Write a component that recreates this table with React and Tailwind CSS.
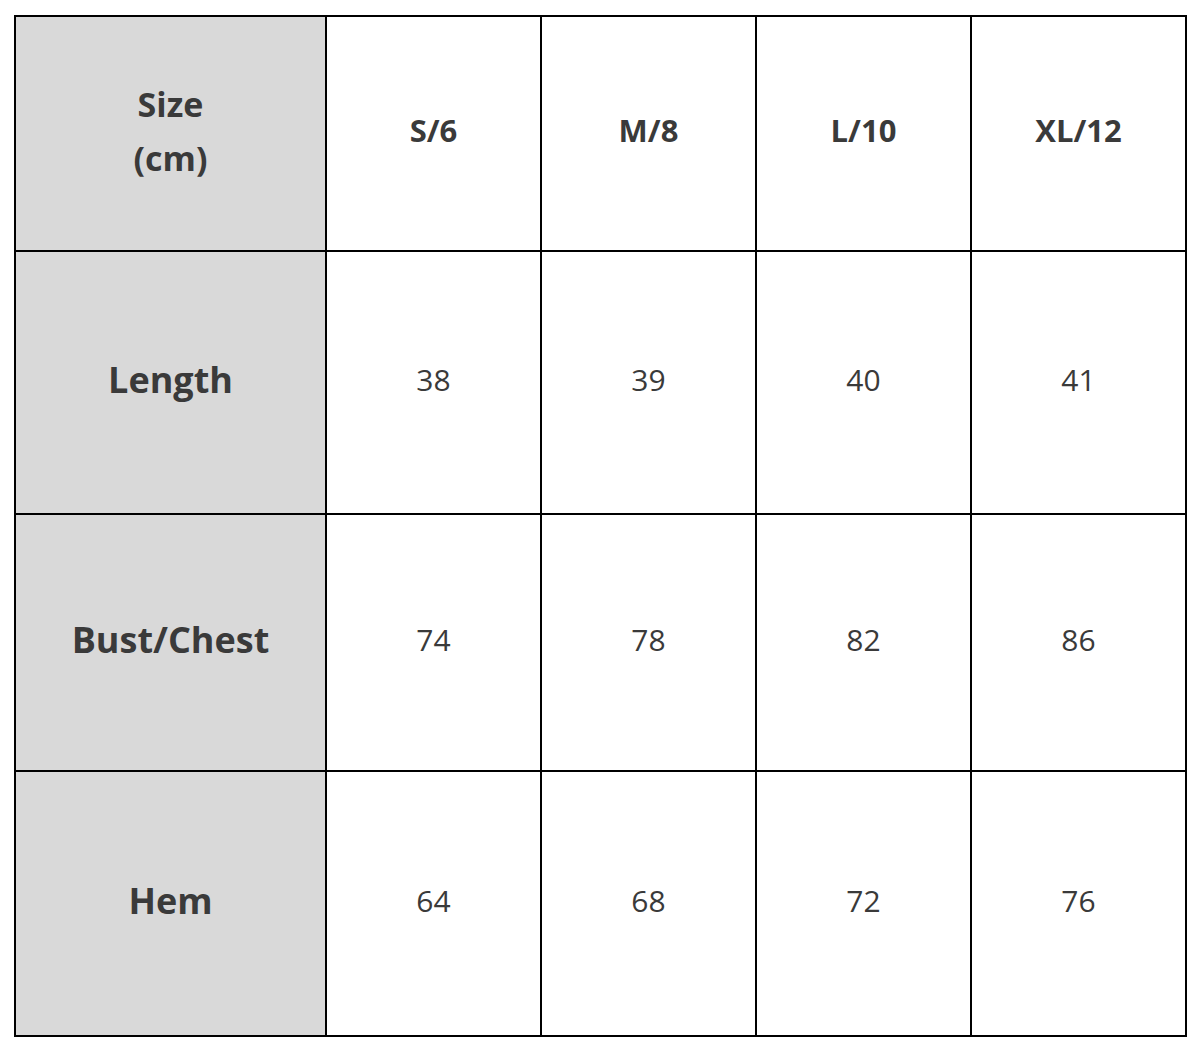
const sizes = ['S/6', 'M/8', 'L/10', 'XL/12']

const rows = [
  { label: 'Length', values: [38, 39, 40, 41], h: 'h-[263px]' },
  { label: 'Bust/Chest', values: [74, 78, 82, 86], h: 'h-[257px]' },
  { label: 'Hem', values: [64, 68, 72, 76], h: 'h-[265px]' },
]

export default function App() {
  return (
    <div className="w-[1200px] h-[1051px] bg-white pt-[15px] pl-[14px]" style={{ fontFamily: '"Open Sans", "Noto Sans", sans-serif' }}>
      <table className="border-collapse border-2 border-black text-[#3a3a3a] w-[1171px] table-fixed">
        <colgroup>
          <col className="w-[311px]" />
          <col className="w-[215px]" />
          <col className="w-[215px]" />
          <col className="w-[215px]" />
          <col className="w-[215px]" />
        </colgroup>
        <tbody>
          <tr className="h-[235px]">
            <td className="border-2 border-black bg-[#d9d9d9] text-center font-bold text-[34px] leading-[54px] pb-[6px]">
              Size<br />(cm)
            </td>
            {sizes.map(s => (
              <td key={s} className="border-2 border-black text-center font-bold text-[31px] pb-[6px]">{s}</td>
            ))}
          </tr>
          {rows.map(r => (
            <tr key={r.label} className={r.h}>
              <td className="border-2 border-black bg-[#d9d9d9] text-center font-bold text-[36px] pb-[6px]">{r.label}</td>
              {r.values.map((v, i) => (
                <td key={i} className="border-2 border-black text-center text-[30px] pb-[6px]">{v}</td>
              ))}
            </tr>
          ))}
        </tbody>
      </table>
    </div>
  )
}
